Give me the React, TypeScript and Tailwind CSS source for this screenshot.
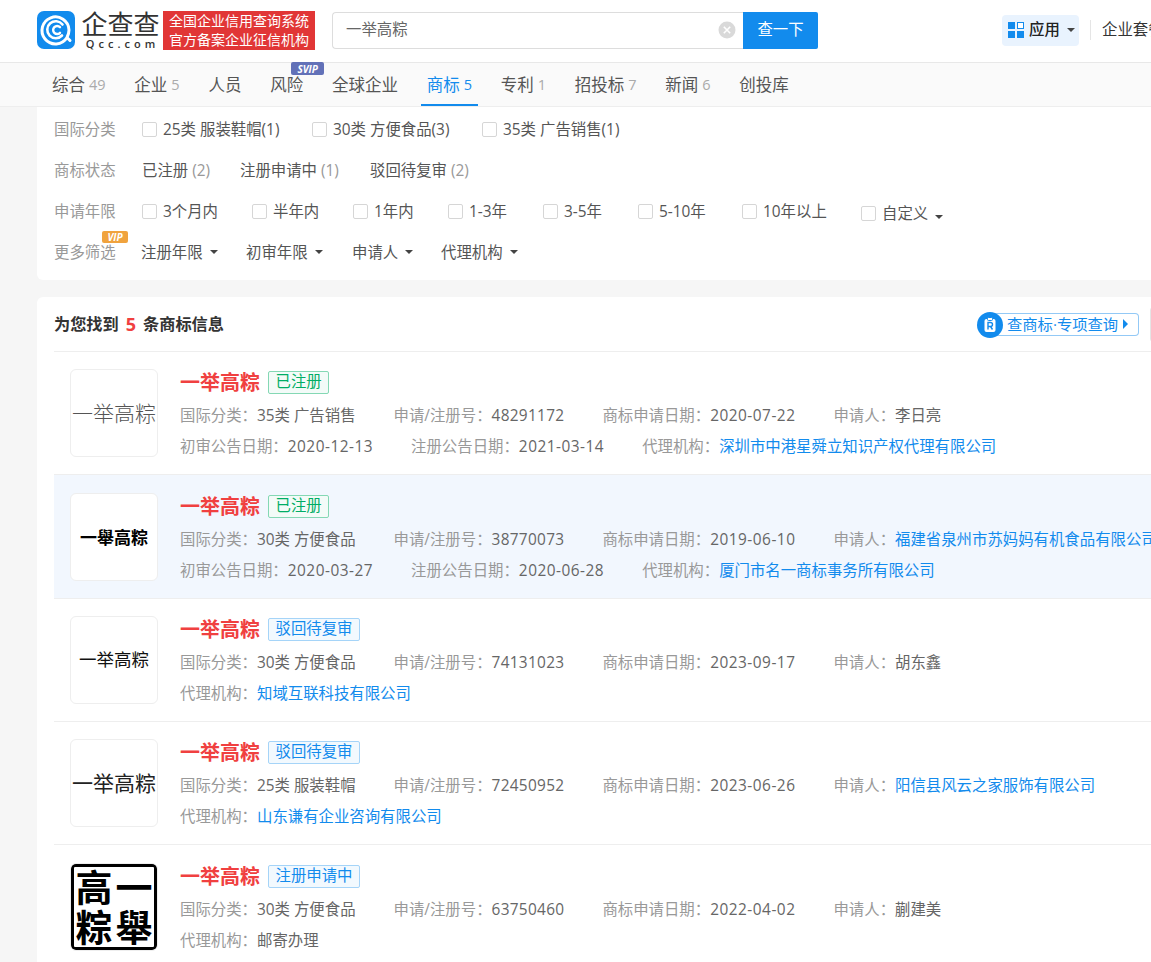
import React from "react";

const FONT = '"Open Sans", "Noto Sans CJK SC", sans-serif';

const navItems = [
  { label: "综合", count: "49" },
  { label: "企业", count: "5" },
  { label: "人员" },
  { label: "风险", svip: true },
  { label: "全球企业" },
  { label: "商标", count: "5", active: true },
  { label: "专利", count: "1" },
  { label: "招投标", count: "7" },
  { label: "新闻", count: "6" },
  { label: "创投库" },
];

type Field = { k: string; v: string; link?: boolean; num?: boolean; date?: boolean };

interface Mark {
  logo: React.ReactNode;
  status: "green" | "blue";
  statusText: string;
  first: Field[];
  second: Field[];
  active?: boolean;
  nudge?: boolean;
}

const marks: Mark[] = [
  {
    logo: <span className="text-[21px] leading-none font-light text-[#555]">一举高粽</span>,
    status: "green",
    statusText: "已注册",
    first: [
      { k: "国际分类", v: "35类 广告销售" },
      { k: "申请/注册号", v: "48291172", num: true },
      { k: "商标申请日期", v: "2020-07-22", date: true },
      { k: "申请人", v: "李日亮" },
    ],
    second: [
      { k: "初审公告日期", v: "2020-12-13", date: true },
      { k: "注册公告日期", v: "2021-03-14", date: true },
      { k: "代理机构", v: "深圳市中港星舜立知识产权代理有限公司", link: true },
    ],
  },
  {
    logo: <span className="text-[17px] leading-none font-bold text-black">一舉高粽</span>,
    status: "green",
    statusText: "已注册",
    active: true,
    nudge: true,
    first: [
      { k: "国际分类", v: "30类 方便食品" },
      { k: "申请/注册号", v: "38770073", num: true },
      { k: "商标申请日期", v: "2019-06-10", date: true },
      { k: "申请人", v: "福建省泉州市苏妈妈有机食品有限公司", link: true },
    ],
    second: [
      { k: "初审公告日期", v: "2020-03-27", date: true },
      { k: "注册公告日期", v: "2020-06-28", date: true },
      { k: "代理机构", v: "厦门市名一商标事务所有限公司", link: true },
    ],
  },
  {
    logo: <span className="text-[17.5px] leading-none text-[#111]">一举高粽</span>,
    status: "blue",
    statusText: "驳回待复审",
    first: [
      { k: "国际分类", v: "30类 方便食品" },
      { k: "申请/注册号", v: "74131023", num: true },
      { k: "商标申请日期", v: "2023-09-17", date: true },
      { k: "申请人", v: "胡东鑫" },
    ],
    second: [{ k: "代理机构", v: "知域互联科技有限公司", link: true }],
  },
  {
    logo: <span className="text-[21px] leading-none text-[#222]">一举高粽</span>,
    status: "blue",
    statusText: "驳回待复审",
    first: [
      { k: "国际分类", v: "25类 服装鞋帽" },
      { k: "申请/注册号", v: "72450952", num: true },
      { k: "商标申请日期", v: "2023-06-26", date: true },
      { k: "申请人", v: "阳信县风云之家服饰有限公司", link: true },
    ],
    second: [{ k: "代理机构", v: "山东谦有企业咨询有限公司", link: true }],
  },
  {
    logo: (
      <div className="grid h-[86px] w-[86px] grid-cols-2 grid-rows-2 place-items-center rounded-[4px] border-[3px] border-black text-[37px] leading-none font-bold text-black">
        <span>高</span>
        <span>一</span>
        <span>粽</span>
        <span>舉</span>
      </div>
    ),
    status: "blue",
    statusText: "注册申请中",
    nudge: true,
    first: [
      { k: "国际分类", v: "30类 方便食品" },
      { k: "申请/注册号", v: "63750460", num: true },
      { k: "商标申请日期", v: "2022-04-02", date: true },
      { k: "申请人", v: "蒯建美" },
    ],
    second: [{ k: "代理机构", v: "邮寄办理" }],
  },
];

const Caret = () => (
  <span className="ml-[7px] inline-block h-0 w-0 border-x-[4px] border-t-[4px] border-x-transparent border-t-[#444]" />
);

const Check = ({ label, className }: { label: string; className: string }) => (
  <div className={`flex items-center ${className}`}>
    <span className="mr-[6px] h-[15px] w-[15px] rounded-[2px] border border-[#d6d6d6] bg-white" />
    <span>{label}</span>
  </div>
);

const FilterRow = ({ label, children }: { label: string; children: React.ReactNode }) => (
  <div className="flex h-[41px] items-center">
    <span className="w-[88px] shrink-0 text-[#999]">{label}</span>
    {children}
  </div>
);

const FieldText = ({ f }: { f: Field }) => (
  <span className="whitespace-nowrap">
    <span className="text-[#999]">{f.k}：</span>
    <span
      className={`${f.link ? "text-[#128bed]" : "text-[#666]"} ${f.num ? "tracking-[0.3px]" : ""} ${
        f.date ? "tracking-[0.5px]" : ""
      }`}
    >
      {f.v}
    </span>
  </span>
);

const MarkRow = ({ mark }: { mark: Mark }) => (
  <div
    className={`flex border-b border-[#eee] pl-4 ${mark.active ? "h-[124px] bg-[#f2f7fe]" : "h-[123px] bg-white"} ${
      mark.nudge ? "pt-[18px]" : "pt-[17px]"
    }`}
  >
    <div className="flex h-[88px] w-[88px] shrink-0 items-center justify-center overflow-hidden rounded-[6px] border border-[#eee] bg-white">
      {mark.logo}
    </div>
    <div className="ml-[22px] min-w-0">
      <div className="flex h-[26px] items-center">
        <span className="mt-[2px] text-[20px] leading-[26px] font-bold text-[#f04040]">一举高粽</span>
        <span
          className={`ml-[8px] flex h-[23px] items-center rounded-[2px] border px-[6.5px] text-[15.4px] ${
            mark.status === "green"
              ? "border-[#84d8b4] bg-[#f3fbf8] text-[#00ad65]"
              : "border-[#a5d4f8] bg-[#f2f9fe] text-[#128bed]"
          }`}
        >
          {mark.statusText}
        </span>
      </div>
      <div className="mt-[5px] flex h-[31px] items-center gap-[38px]">
        {mark.first.map((f) => (
          <FieldText key={f.k} f={f} />
        ))}
      </div>
      <div className="flex h-[31px] items-center gap-[38px]">
        {mark.second.map((f) => (
          <FieldText key={f.k} f={f} />
        ))}
      </div>
    </div>
  </div>
);

export default function App() {
  return (
    <div className="h-[962px] w-[1151px] overflow-hidden bg-[#f6f6f6] text-[15.4px]" style={{ fontFamily: FONT }}>
      <header className="flex h-[63px] items-center border-b border-[#e8e8e8] bg-white pb-[2px] pl-[37px]">
        <svg width="38" height="38" viewBox="0 0 38 38" className="shrink-0">
          <rect width="38" height="38" rx="7" fill="#128bed" />
          <path d="M30 26.5A13.5 13.5 0 1 1 32 19c0 3-1 5.5-2 7.5l3 3" fill="none" stroke="#fff" strokeWidth="3" strokeLinecap="round" />
          <path d="M25 24.5A8.5 8.5 0 1 1 25.5 13.5" fill="none" stroke="#fff" strokeWidth="2.6" strokeLinecap="round" />
          <path d="M23 21.8A4 4 0 1 1 23 16.2" fill="none" stroke="#fff" strokeWidth="2.4" strokeLinecap="round" />
        </svg>
        <div className="ml-[6px] flex w-[79px] shrink-0 flex-col items-center text-[#333]">
          <span className="text-[26px] leading-[28px] whitespace-nowrap">企查查</span>
          <span className="pl-[4px] text-[11px] leading-[12px] font-semibold tracking-[4px] whitespace-nowrap">Qcc.com</span>
        </div>
        <div className="ml-[3px] flex h-[39px] w-[152px] shrink-0 flex-col items-center justify-center bg-[#e13636] text-[14px] leading-[19px] whitespace-nowrap text-[#fff]">
          <span>全国企业信用查询系统</span>
          <span>官方备案企业征信机构</span>
        </div>
        <div className="ml-[17px] flex h-[37px] w-[411px] shrink-0 items-center justify-between rounded-l-[4px] border border-r-0 border-[#ddd] pr-[7px] pl-[13px] text-[#666]">
          <span>一举高粽</span>
          <svg width="18" height="18" viewBox="0 0 18 18">
            <circle cx="9" cy="9" r="8.5" fill="#d9d9d9" />
            <path d="M5.8 5.8l6.4 6.4M12.2 5.8l-6.4 6.4" stroke="#fff" strokeWidth="1.6" />
          </svg>
        </div>
        <div className="flex h-[37px] w-[75px] shrink-0 items-center justify-center rounded-r-[2px] bg-[#128bed] text-[#fff]">查一下</div>
        <div className="ml-[184px] flex h-[31px] w-[77px] shrink-0 items-center rounded-[4px] bg-[#e9f3fe] pl-[6px]">
          <svg width="16" height="16" viewBox="0 0 16 16">
            <rect width="7" height="7" fill="#128bed" />
            <rect x="9.5" y="0.5" width="6" height="6" fill="#fff" stroke="#128bed" />
            <rect y="9" width="7" height="7" fill="#128bed" />
            <rect x="9" y="9" width="7" height="7" fill="#128bed" />
          </svg>
          <span className="ml-[5px] font-medium text-[#222]">应用</span>
          <Caret />
        </div>
        <div className="ml-[11px] h-[20px] w-px shrink-0 bg-[#e5e5e5]" />
        <span className="ml-[11px] whitespace-nowrap text-[#333]">企业套餐</span>
      </header>

      <nav className="relative flex h-[44px] items-center gap-[28.75px] border-b border-[#eee] bg-[#fafafa] pl-[52px] text-[16.5px] text-[#555]">
        {navItems.map((item) => (
          <div key={item.label} className={`relative flex h-full items-center pt-[1px] whitespace-nowrap ${item.active ? "text-[#128bed]" : ""}`}>
            {item.label}
            {item.count && (
              <span className={`ml-[4px] text-[14.5px] ${item.active ? "text-[#128bed]" : "text-[#aaa]"}`}>{item.count}</span>
            )}
            {item.svip && (
              <span className="absolute top-[-1px] left-[21px] flex h-[13px] w-[33px] items-center justify-center rounded-[2px] bg-[#6271b8] text-[10px] leading-none font-bold text-white italic">
                SVIP
              </span>
            )}
            {item.active && <span className="absolute right-[-6px] bottom-0 left-[-6px] h-[2px] bg-[#128bed]" />}
          </div>
        ))}
      </nav>

      <section className="ml-[37px] h-[173px] w-[1200px] rounded-b-[6px] bg-white pt-[2px] pl-[17px] text-[#555]">
        <FilterRow label="国际分类">
          <Check label="25类 服装鞋帽(1)" className="w-[170px]" />
          <Check label="30类 方便食品(3)" className="w-[170px]" />
          <Check label="35类 广告销售(1)" className="w-[170px]" />
        </FilterRow>
        <FilterRow label="商标状态">
          <span className="w-[98px]">已注册 <span className="text-[#999]">(2)</span></span>
          <span className="w-[130px]">注册申请中 <span className="text-[#999]">(1)</span></span>
          <span>驳回待复审 <span className="text-[#999]">(2)</span></span>
        </FilterRow>
        <FilterRow label="申请年限">
          <Check label="3个月内" className="w-[110px]" />
          <Check label="半年内" className="w-[101px]" />
          <Check label="1年内" className="w-[95px]" />
          <Check label="1-3年" className="w-[95px]" />
          <Check label="3-5年" className="w-[95px]" />
          <Check label="5-10年" className="w-[104px]" />
          <Check label="10年以上" className="w-[119px]" />
          <Check label="自定义" className="mt-[4px] w-auto" />
          <span className="mt-[4px]"><Caret /></span>
        </FilterRow>
        <FilterRow label="更多筛选">
          <div className="relative -ml-px flex">
            <span className="absolute top-[-10px] left-[-39px] flex h-[12px] w-[26px] items-center justify-center rounded-[2px] bg-[#f0a33e] text-[10px] leading-none font-bold text-white italic">
              VIP
            </span>
            <span className="flex w-[105px] items-center">注册年限<Caret /></span>
            <span className="flex w-[106px] items-center">初审年限<Caret /></span>
            <span className="flex w-[89px] items-center">申请人<Caret /></span>
            <span className="flex items-center">代理机构<Caret /></span>
          </div>
        </FilterRow>
      </section>

      <section className="mt-[17px] ml-[37px] w-[1200px] rounded-t-[6px] bg-white pl-[17px]">
        <div className="flex h-[55px] items-center border-b border-[#eee]">
          <h2 className="flex w-[933px] shrink-0 items-center pt-[1px] text-[16.2px] font-bold whitespace-nowrap text-[#333]">
            为您找到<span className="mx-[7px] text-[18px] leading-none text-[#f04040]">5</span>条商标信息
          </h2>
          <div className="relative flex h-[23px] w-[152px] shrink-0 items-center rounded-r-[4px] border border-l-0 border-[#93c9f6] pl-[20px] text-[15.3px] whitespace-nowrap text-[#128bed]">
            <svg width="26" height="26" viewBox="0 0 26 26" className="absolute top-[-2px] left-[-10px]">
              <circle cx="13" cy="13" r="13" fill="#128bed" />
              <rect x="7.5" y="7" width="11" height="13" rx="2" fill="#fff" />
              <rect x="10.5" y="5.5" width="5" height="3" rx="1" fill="#fff" stroke="#128bed" />
              <path d="M11 17.5v-7h2.5a2 2 0 0 1 0 4H11M13.5 14.5l2 3" fill="none" stroke="#128bed" strokeWidth="1.4" />
            </svg>
            查商标·专项查询
            <span className="ml-[5px] h-0 w-0 border-y-[5px] border-l-[5px] border-y-transparent border-l-[#128bed]" />
          </div>
          <div className="ml-[11px] h-[35px] w-[20px] shrink-0 rounded-[3px] border border-[#e5e5e5]" />
        </div>
        {marks.map((mark, i) => (
          <MarkRow key={i} mark={mark} />
        ))}
      </section>
    </div>
  );
}
